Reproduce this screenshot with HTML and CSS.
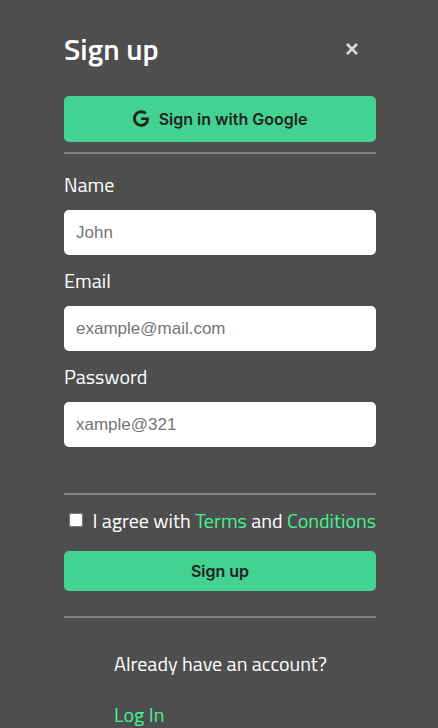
FILE: index.html
```html
<!DOCTYPE html>
<html lang="en">
<head>
<meta charset="utf-8">
<meta name="viewport" content="width=device-width, initial-scale=1">
<title>Sign up</title>
<link rel="stylesheet" href="styles.css">
</head>
<body>
<main class="signup">
  <header class="header">
    <h1 class="title">Sign up</h1>
    <button class="close" type="button" aria-label="Close">
      <svg width="12" height="12" viewBox="0 0 12 12" aria-hidden="true"><path d="M1 1 11 11M11 1 1 11"/></svg>
    </button>
  </header>
  <button class="button google" type="button">
    <svg width="16" height="17" viewBox="0 0 488 512" preserveAspectRatio="none" aria-hidden="true"><path d="M488 261.8C488 403.3 391.1 504 248 504 110.8 504 0 393.2 0 256S110.8 8 248 8c66.8 0 123 24.5 166.3 64.9l-62 62C258.5 47.6 88 106.6 88 256c0 91 72 163 160 163 100 0 140-70 148-118H248v-77h236.1c2.3 12.7 3.9 24.9 3.9 37.8z"/></svg>
    <span>Sign in with Google</span>
  </button>
  <form class="form">
    <div class="fields">
      <div class="field">
        <label for="name">Name</label>
        <input id="name" type="text" placeholder="John">
      </div>
      <div class="field">
        <label for="email">Email</label>
        <input id="email" type="email" placeholder="example@mail.com">
      </div>
      <div class="field">
        <label for="password">Password</label>
        <input id="password" type="password" placeholder="xample@321">
      </div>
    </div>
    <div class="submit">
      <div class="agree">
        <input id="agree" type="checkbox">
        <label for="agree">I agree with <a href="#terms">Terms</a> and <a href="#conditions">Conditions</a></label>
      </div>
      <button class="button" type="submit">Sign up</button>
    </div>
  </form>
  <footer class="account">
    <p>Already have an account?</p>
    <a href="#login">Log In</a>
  </footer>
</main>
</body>
</html>
```
FILE: styles.css
```css
* {
  box-sizing: border-box;
}

body {
  margin: 0;
  background: #4e4e4e;
  color: #fff;
  font: 20px/30px "Titillium Web", Lato, sans-serif;
}

a {
  color: #42f593;
  text-decoration: none;
}

.signup {
  padding: 24px 62px 0 64px;
}

.header {
  display: flex;
  align-items: center;
  justify-content: space-between;
  height: 50px;
  padding-right: 12px;
}

.title {
  margin: 0;
  font-size: 30px;
  line-height: 48px;
  font-weight: 600;
}

.close {
  display: flex;
  padding: 6px;
  border: 0;
  background: none;
  cursor: pointer;
}

.close path {
  fill: none;
  stroke: #ddd;
  stroke-width: 2.5;
}

.button {
  display: flex;
  align-items: center;
  justify-content: center;
  gap: 10px;
  width: 100%;
  height: 40px;
  padding: 0 0 1px;
  border: 0;
  border-radius: 5px;
  background: #43d391;
  color: #222;
  font: 600 16px/20px Inter, Arial, sans-serif;
  cursor: pointer;
}

.button svg {
  fill: #222;
}

.google {
  height: 46px;
  margin: 22px 0 10px;
}

.fields {
  padding: 16px 0 46px;
  border-top: 2px solid #808080;
}

.field + .field {
  margin-top: 11px;
}

.field label {
  display: block;
  margin-bottom: 10px;
}

.field input {
  display: block;
  width: 100%;
  height: 45px;
  padding: 0 12px;
  border: 0;
  border-radius: 5px;
  background: #fff;
  color: #222;
  font: 17px "Liberation Sans", Arial, sans-serif;
}

.field input::placeholder {
  color: #757575;
}

.submit {
  padding: 11px 0 25px;
  border-top: 2px solid #808080;
  border-bottom: 2px solid #808080;
}

.agree {
  display: flex;
  justify-content: space-between;
  margin-bottom: 15px;
  white-space: nowrap;
}

.agree input {
  width: 14px;
  height: 14px;
  margin: 7px 0 0 5px;
}

.account {
  padding: 31px 0 0 50px;
}

.account p {
  margin: 0 0 21px;
}
```
